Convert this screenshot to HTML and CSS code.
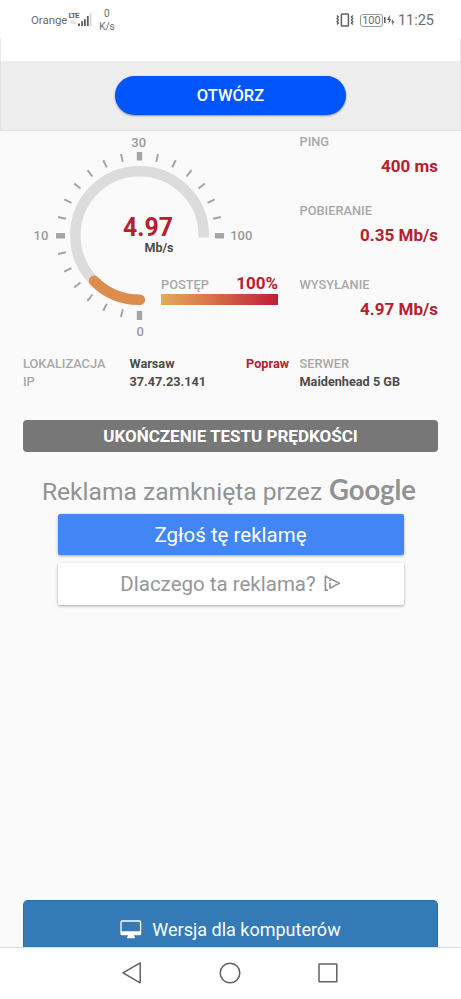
FILE: index.html
```html
<!DOCTYPE html>
<html lang="pl">
<head>
<meta charset="utf-8">
<meta name="viewport" content="width=device-width">
<title>Test prędkości</title>
<link rel="stylesheet" href="styles.css">
</head>
<body>
<div class="screen">
  <header class="status">
    <span class="carrier">Orange</span>
    <span class="network"><span class="lte">LTE</span><span class="fourg">4G</span></span>
    <svg class="signal" width="14" height="14" viewBox="0 0 14 14"><path d="M0 10.5h2v2.5H0zM3.2 8.3h1.8V13H3.2zM6 6.3h1.8V13H6zM8.9 3h1.8v10H8.9z" fill="#5c5c5c"/><path d="M11.8 0h1.6v13h-1.6z" fill="#d2d2d2"/></svg>
    <span class="rate"><span>0</span><span>K/s</span></span>
    <svg class="vibrate" width="18" height="14" viewBox="0 0 18 14" fill="none" stroke="#5f5f5f"><rect x="5.4" y="1" width="7" height="12" rx=".8" stroke-width="1.5"/><path d="M1 2.4l1.4 1.5L1 5.4l1.4 1.5L1 8.4l1.4 1.5L1 11.4M16.8 2.4l-1.4 1.5 1.4 1.5-1.4 1.5 1.4 1.5-1.4 1.5 1.4 1.5" stroke-width="1.4"/></svg>
    <span class="battery">100</span>
    <svg class="charge" width="11" height="14" viewBox="0 0 11 14" fill="#606060"><path d="M0 4h1.6v6H0zM6 1.5L3 7h2l-.6 4L7.4 6H5.6zM8.8 6L7.2 9.3h1.2L8 12.5l2.5-4H9z"/></svg>
    <span class="clock">11:25</span>
  </header>
  <div class="ad-blank"></div>
  <div class="ad-action"><a class="open">OTWÓRZ</a></div>

  <main class="content">
    <section class="results">
      <div class="meter">
        <svg class="gauge" width="277" height="220" viewBox="0 130 277 220">
          <path d="M203.7 237.5v-2A64.2 64.2 0 1 0 139.5 299.7" fill="none" stroke="#dcdcdc" stroke-width="10.6"/>
          <path d="M94.1 280.9A64.2 64.2 0 0 0 139.9 299.7" fill="none" stroke="#dc8d4d" stroke-width="10.6" stroke-linecap="round"/>
          <path d="M139.5 315A79.5 79.5 0 1 1 219 235.5" fill="none" stroke="#a3a3a3" stroke-width="8" pathLength="210" stroke-dasharray="1.1 8.9" stroke-dashoffset=".55"/>
          <path d="M215 235.7h9M56 235.7h9M139.5 152v8.5M139.5 311v9" stroke="#a5a5a5" stroke-width="5.4"/>
          <g class="scale"><text x="138.7" y="146.5" text-anchor="middle">30</text><text x="41" y="240.3" text-anchor="middle">10</text><text x="241.3" y="240.3" text-anchor="middle">100</text><text x="140.3" y="336" text-anchor="middle">0</text></g>
          <text class="speed" x="148" y="236" text-anchor="middle" textLength="50" lengthAdjust="spacingAndGlyphs">4.97</text>
          <text class="unit" x="159" y="252" text-anchor="middle">Mb/s</text>
        </svg>
        <div class="progress">
          <div class="progress-head"><span>POSTĘP</span><b>100%</b></div>
          <div class="progress-bar"></div>
        </div>
      </div>
      <dl class="stats">
        <dt>PING</dt><dd>400 ms</dd>
        <dt>POBIERANIE</dt><dd>0.35 Mb/s</dd>
        <dt>WYSYŁANIE</dt><dd>4.97 Mb/s</dd>
      </dl>
    </section>
    <section class="info">
      <span class="label">LOKALIZACJA</span><span>Warsaw</span><span class="fix">Popraw</span><span class="label">SERWER</span>
      <span class="label">IP</span><span>37.47.23.141</span><span></span><span>Maidenhead 5 GB</span>
    </section>
    <div class="finish">UKOŃCZENIE TESTU PRĘDKOŚCI</div>
    <section class="closed-ad">
      <div class="closed-title"><span>Reklama zamknięta przez</span><svg width="90" height="40" viewBox="0 0 90 40"><text class="google" x="0" y="28" textLength="87" lengthAdjust="spacingAndGlyphs">Google</text></svg></div>
      <a class="report">Zgłoś tę reklamę</a>
      <a class="why"><span>Dlaczego ta reklama?</span><svg width="17" height="17" viewBox="0 0 17 17" fill="none" stroke="#96969a" stroke-width="1.7" stroke-linejoin="round"><path d="M4 15.2H1.4V1.2L15.3 8.3 6 13.2V7.8"/><path d="M6 4.6v1.6"/></svg></a>
    </section>
    <a class="desktop"><svg width="22" height="19" viewBox="0 0 22 19"><rect x="1" y="1" width="19.6" height="13.6" rx="1.2" fill="none" stroke="#fff" stroke-width="1.3"/><path d="M1 11.2h19.6v3.5H1zM8 14.5h6v2h1v1.7H7v-1.7h1z" fill="#fff"/></svg><span>Wersja dla komputerów</span></a>
  </main>
  <nav class="navbar">
    <svg width="22" height="24" viewBox="0 0 22 24"><path d="M19.2 1.8v20L2 11.8z"/></svg>
    <svg width="24" height="24" viewBox="0 0 24 24"><circle cx="12" cy="12" r="9.8"/></svg>
    <svg width="22" height="24" viewBox="0 0 22 24"><rect x="2" y="3" width="17.8" height="17.8" rx=".5"/></svg>
  </nav>
</div>
</body>
</html>
```
FILE: styles.css
```css
* { box-sizing: border-box; }
body { margin: 0; font-family: Roboto, "Liberation Sans", sans-serif; background: #fff; }
svg { display: block; flex: none; overflow: visible; }
.screen { width: 461px; height: 999px; display: flex; flex-direction: column; overflow: hidden; }

.status { height: 38px; flex: none; display: flex; align-items: center; padding: 2px 27px 0 31px; color: #6c6c6c; }
.carrier { font-size: 11.4px; width: 37px; }
.network { width: 10px; display: flex; flex-direction: column; align-items: center; line-height: 8px; margin-top: -3px; }
.lte { font-size: 8px; font-weight: 700; letter-spacing: -1px; margin-right: -1px; color: #666; }
.fourg { font-size: 4.5px; line-height: 6px; color: #c4c4c4; }
.signal { margin-top: -1px; }
.rate { display: flex; flex-direction: column; align-items: center; font-size: 10px; line-height: 13.5px; width: 16px; margin-left: 7px; }
.vibrate { margin-left: 221px; }
.battery { border: 1px solid #999; border-radius: 3px; font-size: 11px; line-height: 11px; width: 23px; text-align: center; margin-left: 6px; }
.charge { margin-left: 1px; }
.clock { font-size: 14.5px; margin-left: 3px; white-space: nowrap; }

.ad-blank { height: 23px; flex: none; border: solid #e6e6e6; border-width: 0 1px; }
.ad-action { height: 70px; flex: none; background: #ededed; border: 1px solid #e3e3e3; border-top: 0; display: flex; justify-content: center; padding-top: 15px; }
.open { width: 231px; height: 38.5px; border-radius: 20px; background: #0056fc; color: #fff; font-size: 16.5px; font-weight: 500; line-height: 39px; text-align: center; box-shadow: 0 1px 2px rgba(0,0,0,.4); }

.content { flex: 1; min-height: 0; background: #fafafa; overflow: hidden; display: flex; flex-direction: column; }
.results { display: flex; height: 223px; flex: none; margin-top: -1px; }
.meter { display: grid; width: 299.5px; }
.gauge, .progress { grid-area: 1 / 1; }
.scale { font-size: 13px; fill: #999; font-weight: 500; }
.speed { font-size: 26px; font-weight: 700; fill: #b5202e; }
.unit { font-size: 12.5px; font-weight: 700; fill: #4c4c4c; }
.progress { align-self: start; width: 117px; margin: 144px 0 0 161px; }
.progress-head { display: flex; justify-content: space-between; align-items: baseline; height: 20px; font-size: 12.8px; font-weight: 500; color: #a8a8a8; line-height: 18px; }
.progress-head b { color: #b5202e; font-size: 17px; }
.progress-bar { height: 11px; background: linear-gradient(90deg, #e0ac5c, #dc8550 30%, #be1e36); }
.stats { margin: 2px 0 0; width: 138.5px; }
.stats dt { font-size: 12.8px; font-weight: 500; line-height: 20px; color: #a8a8a8; }
.stats dd { margin: 4px 0 25px; font-size: 17px; font-weight: 700; line-height: 20px; text-align: right; color: #b5202e; }
.stats dd:nth-of-type(2) { margin-bottom: 30px; }

.info { display: grid; grid-template-columns: 106.5px 100px 59.5px 138px; grid-template-rows: 18.4px 18.4px; line-height: 18.4px; margin: 1.5px 23px 0; font-size: 12.7px; font-weight: 700; color: #4c4c4c; flex: none; }
.info .label { color: #a8a8a8; font-weight: 500; font-size: 12.8px; }
.info .fix { color: #b5202e; text-align: right; }
.info > :nth-child(4n) { padding-left: 10.5px; white-space: nowrap; }
.finish { height: 32px; flex: none; margin: 28.3px 23px 0; border-radius: 4px; background: #777; color: #fff; font-size: 17px; font-weight: 700; line-height: 33px; text-align: center; }

.closed-ad { display: flex; flex-direction: column; align-items: center; margin-top: 20.2px; flex: none; }
.closed-title { display: flex; align-items: center; gap: 7px; height: 40px; font-size: 24.6px; color: #929292; white-space: nowrap; }
.google { font-family: Lato, sans-serif; font-size: 28.5px; font-weight: 700; fill: #929292; }
.report, .why { width: 346px; border-radius: 2px; font-size: 20.5px; display: flex; align-items: center; justify-content: center; box-shadow: 0 1px 3px rgba(0,0,0,.35); }
.report { height: 41px; margin-top: 2.5px; background: #4285f4; color: #fff; }
.why { height: 42px; margin-top: 7.5px; background: #fff; color: #96969a; gap: 8px; }

.desktop { margin: auto 23px 0; height: 47px; flex: none; border: 1px solid #2e6da4; border-bottom: 0; border-radius: 5px 5px 0 0; background: #337ab7; color: #fff; font-size: 18px; display: flex; align-items: center; justify-content: center; gap: 10px; padding-top: 11px; }
.navbar { height: 52px; flex: none; border-top: 1px solid #d7dce2; background: #fff; display: flex; justify-content: space-between; align-items: center; padding: 0 122px 2px 121px; }
.navbar svg { fill: none; stroke: #606060; stroke-width: 1.5; stroke-linejoin: round; }
```
